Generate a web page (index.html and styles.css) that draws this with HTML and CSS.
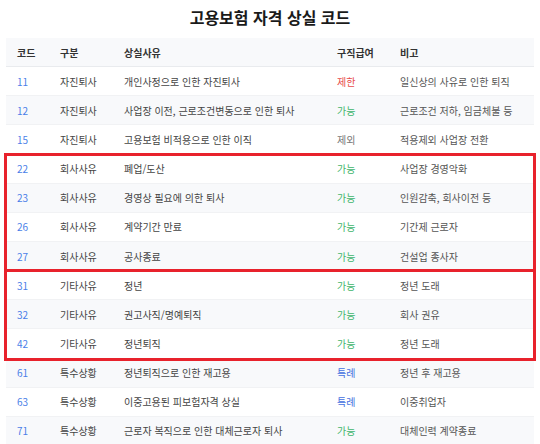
FILE: index.html
```html
<!DOCTYPE html>
<html lang="ko">
<head>
<meta charset="utf-8">
<title>고용보험 자격 상실 코드</title>
<link rel="stylesheet" href="styles.css">
</head>
<body>
<h1 class="title">고용보험 자격 상실 코드</h1>
<div class="table">
  <div class="row head">
    <div>코드</div><div>구분</div><div>상실사유</div><div>구직급여</div><div>비고</div>
  </div>
  <div class="group">
    <div class="row"><div class="code">11</div><div>자진퇴사</div><div>개인사정으로 인한 자진퇴사</div><div class="no">제한</div><div class="note">일신상의 사유로 인한 퇴직</div></div>
    <div class="row alt"><div class="code">12</div><div>자진퇴사</div><div>사업장 이전, 근로조건변동으로 인한 퇴사</div><div class="yes">가능</div><div class="note">근로조건 저하, 임금체불 등</div></div>
    <div class="row"><div class="code">15</div><div>자진퇴사</div><div>고용보험 비적용으로 인한 이직</div><div class="ex">제외</div><div class="note">적용제외 사업장 전환</div></div>
  </div>
  <div class="group boxed">
    <div class="row"><div class="code">22</div><div>회사사유</div><div>폐업/도산</div><div class="yes">가능</div><div class="note">사업장 경영악화</div></div>
    <div class="row alt"><div class="code">23</div><div>회사사유</div><div>경영상 필요에 의한 퇴사</div><div class="yes">가능</div><div class="note">인원감축, 회사이전 등</div></div>
    <div class="row"><div class="code">26</div><div>회사사유</div><div>계약기간 만료</div><div class="yes">가능</div><div class="note">기간제 근로자</div></div>
    <div class="row alt"><div class="code">27</div><div>회사사유</div><div>공사종료</div><div class="yes">가능</div><div class="note">건설업 종사자</div></div>
  </div>
  <div class="group boxed">
    <div class="row"><div class="code">31</div><div>기타사유</div><div>정년</div><div class="yes">가능</div><div class="note">정년 도래</div></div>
    <div class="row alt"><div class="code">32</div><div>기타사유</div><div>권고사직/명예퇴직</div><div class="yes">가능</div><div class="note">회사 권유</div></div>
    <div class="row"><div class="code">42</div><div>기타사유</div><div>정년퇴직</div><div class="yes">가능</div><div class="note">정년 도래</div></div>
  </div>
  <div class="group">
    <div class="row alt"><div class="code">61</div><div>특수상황</div><div>정년퇴직으로 인한 재고용</div><div class="special">특례</div><div class="note">정년 후 재고용</div></div>
    <div class="row"><div class="code">63</div><div>특수상황</div><div>이중고용된 피보험자격 상실</div><div class="special">특례</div><div class="note">이중취업자</div></div>
    <div class="row alt"><div class="code">71</div><div>특수상황</div><div>근로자 복직으로 인한 대체근로자 퇴사</div><div class="yes">가능</div><div class="note">대체인력 계약종료</div></div>
  </div>
</div>
</body>
</html>
```

FILE: styles.css
```css
* { box-sizing: border-box; }
html, body { margin: 0; padding: 0; background: #ffffff; }
body {
  font-family: "Noto Sans CJK KR", "Noto Sans", sans-serif;
  color: #444;
  padding: 0 6px;
}
.title {
  margin: 0;
  padding-top: 6px;
  height: 38px;
  text-align: center;
  font-size: 16px;
  line-height: 22px;
  font-weight: 700;
  color: #1a1a1a;
}
.table { display: flex; flex-direction: column; }
.row {
  display: grid;
  grid-template-columns: 43px 64px 213px 63px 1fr;
  height: 29.15px;
  align-items: center;
  font-size: 10px;
  border-bottom: 1px solid #f1f2f4;
  background: #ffffff;
}
.row > div { padding-left: 11px; white-space: nowrap; }
.row.alt { background: #f8f9fb; }
.row.head {
  background: #f8f9fb;
  font-weight: 700;
  color: #333;
  border-bottom: 1px solid #e9ebee;
}
.group.boxed {
  outline: 3px solid #e8222c;
  outline-offset: -1px;
  position: relative;
  z-index: 1;
}
.code { color: #4b7fe8; }
.yes { color: #3fb56b; }
.no { color: #e84a4a; }
.ex { color: #777; }
.special { color: #4470e0; }
.note { color: #555; }
```
